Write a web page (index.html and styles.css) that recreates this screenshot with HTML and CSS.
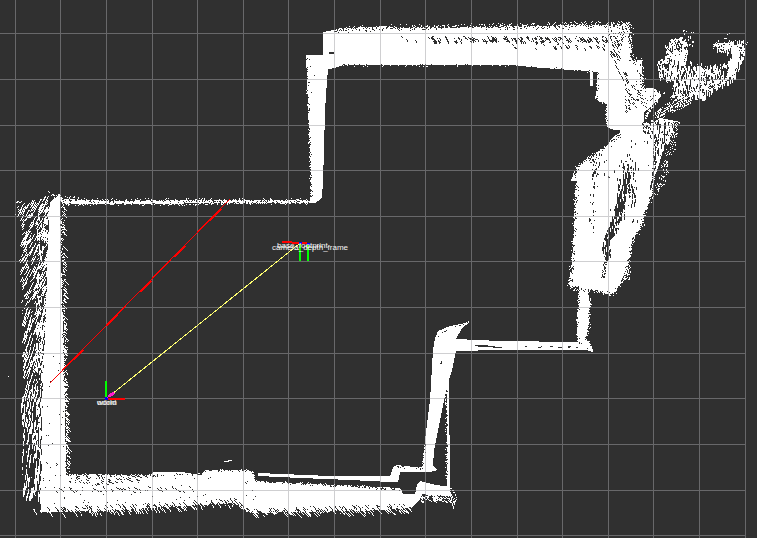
FILE: index.html
```
<!DOCTYPE html>
<html lang="en">
<head>
<meta charset="utf-8">
<title>Point cloud map</title>
<link rel="stylesheet" href="styles.css">
</head>
<body>
<main class="viewport">
  <svg class="scene" viewBox="0 0 757 538" role="img" aria-label="Top-down point cloud map with coordinate frames">
    <path class="cloud" id="cloud"/>
    <path class="grid" id="grid"/>
    <g class="scan">
      <path d="M230 199L50 383"/>
      <path class="scan-thick" d="M221 209L209 221M185 246L174 257M151 281L140 292M117 315L106 326M83 350L73 360"/>
    </g>
    <path class="link" d="M299 244L112 394"/>
    <g class="frames">
      <path class="axis-x" d="M107 399H125M282 242L301 243M300 243H307"/>
      <path class="axis-y" d="M106 381V398M300 244V261M308 245V261"/>
      <path class="axis-z" d="M105 397h3v3h-3zM299 242h3v2h-3zM307 243h3v2h-3z"/>
      <path class="arrow" d="M107 398L110 393L113 392L115 394L112 396Z"/>
    </g>
    <g class="labels">
      <text x="97" y="405">world</text>
      <text x="97" y="405">odom</text>
      <text x="277" y="248">base_footprint</text>
      <text x="272" y="250">camera_depth_frame</text>
    </g>
  </svg>
</main>
<script src="cloud.js"></script>
</body>
</html>
```

FILE: styles.css
```
body {
  margin: 0;
  background: #303030;
}

.viewport {
  min-height: 100vh;
  overflow: hidden;
}

.scene {
  display: block;
  width: 100%;
  height: auto;
}

.cloud {
  fill: #fff;
  shape-rendering: crispEdges;
}

.grid {
  fill: #a0a0a4;
  fill-opacity: 0.5;
  shape-rendering: crispEdges;
}

.scan {
  fill: none;
  stroke: #f00;
  stroke-width: 1;
  shape-rendering: crispEdges;
}

.scan-thick {
  stroke-width: 2;
}

.link {
  stroke: #ffff70;
  stroke-width: 1;
  shape-rendering: crispEdges;
}

.frames {
  stroke-width: 2;
  shape-rendering: crispEdges;
}

.axis-x {
  fill: none;
  stroke: #f00;
}

.axis-y {
  fill: none;
  stroke: #0f0;
}

.axis-z {
  fill: #00f;
}

.arrow {
  fill: #ff1acc;
}

.labels {
  fill: #f4f4f4;
  font-family: "Liberation Sans", Arial, sans-serif;
  font-size: 8px;
}
```

FILE: cloud.js
```
const W = 757, H = 538;
const cells = new Uint8Array(W * H);

// Seeded generator, so the cloud is the same on every load
let seed = 90210;
function rnd() {
  seed = (seed + 0x6D2B79F5) | 0;
  let t = Math.imul(seed ^ (seed >>> 15), 1 | seed);
  t = (t + Math.imul(t ^ (t >>> 7), 61 | t)) ^ t;
  return ((t ^ (t >>> 14)) >>> 0) / 4294967296;
}

function put(x, y, v) {
  x = Math.round(x);
  y = Math.round(y);
  if (x >= 0 && y >= 0 && x < W && y < H) cells[y * W + x] = v;
}

function points(text) {
  return text.trim().split(/\s+/).map(p => p.split(',').map(Number));
}

function each(poly, fn) {
  const ys = poly.map(p => p[1]);
  for (let y = Math.min(...ys); y < Math.max(...ys); y++) {
    const hits = [];
    poly.forEach((a, i) => {
      const b = poly[(i + 1) % poly.length];
      const yy = y + 0.5;
      if ((a[1] <= yy) !== (b[1] <= yy)) {
        hits.push(a[0] + (yy - a[1]) * (b[0] - a[0]) / (b[1] - a[1]));
      }
    });
    hits.sort((m, n) => m - n);
    for (let i = 0; i + 1 < hits.length; i += 2) {
      for (let x = Math.round(hits[i]); x < Math.round(hits[i + 1]); x++) fn(x, y);
    }
  }
}

function solid(text, v = 1) {
  each(points(text), (x, y) => put(x, y, v));
}

// Short runs of points along the direction (dx, dy)
function streaks(text, density, v, dx = 0, dy = 1, len = 1) {
  const found = [];
  each(points(text), (x, y) => { if (rnd() < density) found.push([x, y]); });
  found.forEach(([x, y]) => {
    const n = 1 + Math.floor(rnd() * len);
    for (let i = 0; i < n; i++) put(x + dx * i, y + dy * i, v);
  });
}

// Ragged edge: loose points and small bites along a polyline
function fuzz(text, spread, density) {
  const p = points(text);
  for (let i = 0; i + 1 < p.length; i++) {
    const [ax, ay] = p[i], [bx, by] = p[i + 1];
    const d = Math.hypot(bx - ax, by - ay);
    const nx = -(by - ay) / d, ny = (bx - ax) / d;
    for (let s = 0; s < d; s++) {
      for (let k = -spread; k <= spread; k++) {
        if (rnd() < density * (1 - Math.abs(k) / (spread + 1))) {
          put(ax + (bx - ax) * s / d + nx * k, ay + (by - ay) * s / d + ny * k, rnd() < 0.5 ? 1 : 0);
        }
      }
    }
  }
}

// Spikes leaving an edge in the direction (dx, dy)
function spikes(text, dx, dy, len, density) {
  const p = points(text);
  for (let i = 0; i + 1 < p.length; i++) {
    const [ax, ay] = p[i], [bx, by] = p[i + 1];
    const d = Math.hypot(bx - ax, by - ay);
    for (let s = 0; s < d; s++) {
      if (rnd() > density) continue;
      const n = rnd() * len;
      for (let k = 0; k < n; k++) put(ax + (bx - ax) * s / d + dx * k, ay + (by - ay) * s / d + dy * k, 1);
    }
  }
}

// Upper corridor and the column below it
solid('323,32 334,30 340,28 375,27 383,26 400,28 440,28 480,27 530,26 600,25 630,24 631,60 642,60 643,88 655,88 661,96 650,108 644,112 643,130 620,132 608,128 606,126 606,104 600,102 595,98 597,90 597,72 593,72 593,86 590,86 590,71 570,70 530,67 513,65 343,65 335,68 328,69 327,80 325,110 324,150 323,180 322,198 315,203 308,203 311,197 311,170 310,150 308,110 307,79 306,55 323,55');
fuzz('334,29 400,27 480,26 560,26 629,23', 3, .6);
fuzz('500,26 629,23', 3, .4);
fuzz('306,56 307,79 308,110 311,197', 1, .5);
fuzz('343,65 513,65 592,71', 1, .25);
fuzz('630,24 631,60 642,60 643,88', 3, .6);
fuzz('597,72 597,90 595,98 606,104 606,126', 1, .5);
solid('329,52 334,52 334,54 329,54', 0);
streaks('380,36 430,36 430,41 380,41', .04, 0, .6, 1, 3);
// Rows of slanted gaps, one every eight units or so
for (let x = 430; x < 606; x += 5 + Math.floor(rnd() * 6)) {
  const y = 36 + Math.floor(rnd() * 2);
  const w = x > 470 ? 5 : 4;
  streaks(`${x},${y} ${x + w},${y} ${x + w + 3},${y + 6} ${x + 3},${y + 6}`, .3, 0, .6, 1, 3);
  if (x > 505 && rnd() < .7) streaks(`${x},44 ${x + 4},44 ${x + 7},49 ${x + 3},49`, .14, 0, .6, 1, 3);
}
streaks('608,24 630,24 630,38 608,38', .15, 0);
streaks('610,36 622,36 622,56 610,56', .13, 0, .6, 1, 4);
streaks('612,60 620,58 629,78 624,82', .13, 0, .6, 1, 5);
streaks('625,80 635,84 645,102 625,112', .13, 0, 1, 1, 2);
streaks('632,60 658,88 656,108 640,108', .07, 0);
streaks('309,57 316,57 313,110 309,110', .04, 0);

// Sweep at the upper right
streaks('664,46 671,39 684,36 688,45 687,62 670,60', .38, 1, 0, 1, 3);
streaks('682,30 694,32 694,46 684,44', .14, 1, 0, 1, 2);
streaks('657,62 675,50 688,50 686,92 680,98 670,98 674,82 660,79', .5, 1, 0, 1, 4);
solid('676,55 684,54 682,66 700,66 702,76 694,88 684,94 672,97 675,81 661,78 660,74 671,66');
streaks('658,66 690,54 706,66 700,98 674,98 658,80', .12, 0, 0, 1, 5);
streaks('682,60 706,64 704,90 684,98', .08, 1, 0, 1, 4);
streaks('712,46 718,40 744,40 745,56 735,78 728,78 728,60 735,54 718,51', .3, 1, 0, 1, 4);
streaks('713,43 742,42 742,50 713,49', .25, 1, 1, 0, 4);
solid('733,47 738,47 738,64 733,74 726,77 729,68 732,58');
streaks('697,66 728,63 737,70 733,79 704,97 690,98', .24, 1, 0, 1, 5);
streaks('652,115 672,99 700,88 725,78 732,79 690,104 658,121', .24, 1, 1.7, -1, 3);
streaks('660,90 666,92 650,112 646,124 642,124 644,110', .35, 1, 0, 1, 2);
streaks('744,36 757,42 754,50 744,50', .05, 1);
streaks('726,32 730,32 731,40 724,40', .12, 1);

// Right wall and the slope beside it
solid('620,132 612,138 606,147 600,150 592,155 582,162 576,168 572,178 570,181 577,181 575,190 574,230 572,262 570,275 569,285 573,288 579,286 578,300 577,322 576,335 579,343 593,352 592,346 586,338 589,325 590,305 588,290 594,293 612,294 618,288 624,275 629,262 632,240 642,226 644,215 652,195 654,182 657,170 664,150 671,140 675,121 660,118 650,124 643,120');
// Shadow under the upper corridor
solid('607,130 620,130 620,133 612,137 607,135', 0);
fuzz('620,134 606,147 592,155 576,168 571,181', 2, .6);
fuzz('576,185 574,230 572,262 569,285 573,288 590,290 612,294 618,288 624,275 629,262 632,240 642,226 644,215 652,195', 2, .55);
fuzz('579,290 577,320 576,335 580,344', 1, .5);
fuzz('590,298 589,325 586,338 593,350', 1, .5);
streaks('642,117 656,117 652,138 643,132', .25, 0, 0, 1, 2);
streaks('653,120 677,121 673,145 666,170 660,184 650,190 654,150', .11, 0, 0, 1, 5);
fuzz('676,120 673,142 666,160 663,180 652,195', 4, .6);
solid('654,143 656,138 655,178 652,176', 0);
streaks('651,120 656,120 656,178 652,178', .25, 1, 0, 1, 2);
solid('627,172 632,172 622,215 618,232 610,240 611,258 606,262 602,250 604,239 610,224 614,210', 0);
streaks('622,172 633,170 624,216 618,240 606,264 603,245', .12, 1, 0, 1, 5);
streaks('622,160 636,160 637,200 623,220 614,214', .1, 0, 0, 1, 5);
streaks('603,262 607,262 605,279 601,278', .45, 0);
streaks('592,165 600,165 594,235 588,235', .05, 0, 0, 1, 3);
streaks('588,150 602,150 599,184 592,184', .07, 0, 0, 1, 3);
streaks('600,140 655,140 640,225 607,210', .012, 0, 0, 1, 3);
streaks('588,289 602,291 601,297 588,297', .4, 0);
streaks('625,266 631,266 630,280 622,280', .4, 1);

// Passage on the lower right
solid('258,473 330,476 390,476 393,467 397,465 422,468 425,440 430,400 433,350 435,338 438,331 450,326 470,322 462,328 456,339 500,341 577,342 593,352 586,350 500,350 456,351 452,370 449,380 444,400 440,420 434,450 433,466 438,470 430,472 400,472 398,482 390,482 350,480 300,478 258,476');
solid('473,345 485,345 505,348 480,347', 0);
streaks('525,346 578,346 578,348 525,348', .1, 0, 1, 0, 3);
solid('441,361 442,361 442,364 440,364', 0);
fuzz('436,337 450,327 470,322', 1, .5);
fuzz('425,440 422,468 397,466', 1, .5);
solid('447,381 449,381 450,489 447,489');
fuzz('446,390 446,489', 1, .5);

// Left wall, loose on its outer side
solid('50,202 60,194 62,300 64,350 66,472 66,512 41,512 43,380 46,310 49,220');
streaks('20,206 26,200 49,200 48,225 46,250 20,250 22,230 17,218', .12, 1, .6, -1, 7);
streaks('19,250 47,250 45,315 22,315', .09, 1, .5, -1, 9);
streaks('22,315 45,315 43,400 23,400', .07, 1, .3, -1, 12);
streaks('21,400 43,400 41,505 23,500', .065, 1, .12, -1, 13);
streaks('37,210 50,206 46,315 43,400 41,500 35,500', .08, 1, 0, 1, 7);
streaks('15,202 22,202 20,219 14,215', .08, 1, .6, -1, 2);
fuzz('62,205 63,300 65,350 67,472', 2, .6);
spikes('63,200 64,350 67,465', 1, 1, 5, .3);
streaks('47,190 53,194 62,194 62,199 54,199', .25, 1, 1, 1, 2);
streaks('48,350 63,350 65,510 42,510', .012, 0);
put(8, 376, 1);

// Upper left wall
solid('58,198 64,199 110,201 180,200 315,200 315,203 185,203 180,204 80,204 62,203');
fuzz('62,199 110,200 200,200 310,200', 2, .45);
fuzz('62,204 180,204 240,203 310,203', 1, .5);
streaks('64,195 78,197 78,200 64,200', .2, 1);

// Lower left floor
solid('64,474 150,475 153,472 182,472 200,475 205,470 252,470 255,481 310,484 360,486 400,488 403,494 415,494 417,485 420,481 436,485 450,487 451,497 420,499 412,507 400,509 360,511 300,512 250,513 242,509 235,503 200,505 150,508 100,511 40,512');
fuzz('66,474 150,475 200,474 205,470 252,470 256,481 360,486 402,490', 1, .6);
spikes('28,509 60,511 150,507 200,503 235,501', .7, 1, 7, .5);
spikes('235,501 244,511 300,511 360,510 410,506', 1, 1, 7, .5);
streaks('45,507 150,503 235,498 246,508 405,504 405,511 245,514 235,505 150,509 60,513', .12, 0, .8, 1, 4);
streaks('68,475 150,475 150,478 90,486 68,482', .1, 0, 1, .6, 3);
streaks('50,487 195,486 195,492 50,492', .04, 0, 1, .7, 3);
streaks('50,475 270,475 260,500 50,505', .009, 0);
streaks('420,494 452,496 454,501 420,500', .4, 0, 1, 0, 2);
streaks('420,497 450,497 450,502 420,502', .25, 1, 1, .5, 3);
streaks('448,484 455,492 457,499 453,510 451,500', .45, 1);
solid('224,461 228,461 228,460 232,460 232,461 229,461 229,462 224,462');

let d = '';
for (let y = 0; y < H; y++) {
  for (let x = 0; x < W; x++) {
    if (!cells[y * W + x]) continue;
    const from = x;
    while (x < W && cells[y * W + x]) x++;
    d += `M${from} ${y}h${x - from}v1H${from}z`;
  }
}
document.getElementById('cloud').setAttribute('d', d);

const columns = [15, 60, 106, 152, 197, 243, 288, 334, 380, 425, 471, 517, 562, 608, 653, 699, 745];
const rows = [33, 79, 125, 170, 216, 261, 307, 353, 398, 444, 490, 535];
document.getElementById('grid').setAttribute('d',
  columns.map(x => `M${x} 0h1v${H}h-1z`).join('') +
  rows.map(y => `M0 ${y}h745v1H0z`).join(''));
```
